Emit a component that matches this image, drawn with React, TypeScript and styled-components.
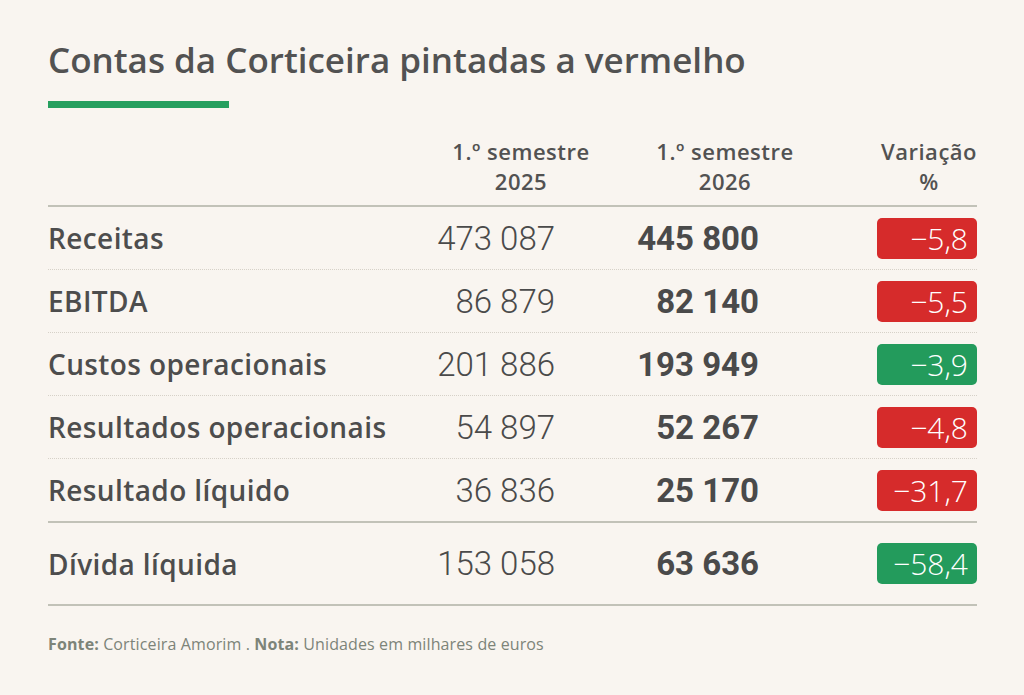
import React from "react";
import styled, { createGlobalStyle } from "styled-components";

const GlobalStyle = createGlobalStyle`
  html, body {
    margin: 0;
    padding: 0;
    background: #f9f5f0;
  }
  body {
    font-family: "Open Sans", "Liberation Sans", sans-serif;
    color: #4d4d4d;
  }
`;

const Page = styled.div`
  width: 1024px;
  height: 695px;
  box-sizing: border-box;
  padding: 38px 47px 0 48px;
  background: #f9f5f0;
`;

const Title = styled.h1`
  margin: 0;
  font-size: 35px;
  line-height: 44px;
  font-weight: 600;
  color: #525252;
`;

const Accent = styled.div`
  width: 181px;
  height: 7px;
  margin-top: 19px;
  background: #27a05f;
`;

const Row = styled.div<{ $last?: boolean; $tall?: boolean }>`
  display: grid;
  grid-template-columns: 1fr 204px 204px 150px;
  align-items: center;
  height: ${(p) => (p.$tall ? "81px" : "62px")};
  border-bottom: ${(p) => (p.$last ? "2px solid #c2c2b8" : "1px dotted #d6d1c8")};
`;

const HeadRow = styled(Row)`
  height: auto;
  margin-top: 28px;
  padding-bottom: 9px;
  border-bottom: 2px solid #c2c2b8;
`;

const HeadCell = styled.div<{ $end?: boolean }>`
  font-size: 22px;
  line-height: 30px;
  letter-spacing: 0.5px;
  font-weight: 600;
  color: #525252;
  text-align: center;
  justify-self: ${(p) => (p.$end ? "end" : "center")};
  white-space: nowrap;
`;

const Label = styled.div`
  font-size: 28px;
  letter-spacing: 0.4px;
  font-weight: 600;
  color: #4d4d4d;
  white-space: nowrap;
`;

const Value = styled.div<{ $bold?: boolean }>`
  font-family: "Roboto", "Liberation Sans", sans-serif;
  font-size: 33px;
  font-weight: ${(p) => (p.$bold ? 700 : 300)};
  color: #4a4a4a;
  text-align: right;
  padding-right: 68px;
`;

const Badge = styled.div<{ $good?: boolean }>`
  justify-self: end;
  width: 100px;
  height: 41px;
  box-sizing: border-box;
  border-radius: 5px;
  background: ${(p) => (p.$good ? "#239b5c" : "#d62b2b")};
  color: #fff;
  font-size: 30px;
  font-weight: 300;
  line-height: 41px;
  text-align: right;
  padding-right: 9px;
`;

const Footer = styled.p`
  margin: 27px 0 0;
  font-size: 16px;
  letter-spacing: 0.12px;
  color: #7d8479;
  & b {
    font-weight: 700;
  }
`;

type Line = { label: string; a: string; b: string; v: string; good?: boolean };

const lines: Line[] = [
  { label: "Receitas", a: "473 087", b: "445 800", v: "−5,8" },
  { label: "EBITDA", a: "86 879", b: "82 140", v: "−5,5" },
  { label: "Custos operacionais", a: "201 886", b: "193 949", v: "−3,9", good: true },
  { label: "Resultados operacionais", a: "54 897", b: "52 267", v: "−4,8" },
  { label: "Resultado líquido", a: "36 836", b: "25 170", v: "−31,7" },
];

export default function App() {
  return (
    <>
      <GlobalStyle />
      <Page>
        <Title>Contas da Corticeira pintadas a vermelho</Title>
        <Accent />
        <HeadRow>
          <div />
          <HeadCell>
            1.º semestre
            <br />
            2025
          </HeadCell>
          <HeadCell>
            1.º semestre
            <br />
            2026
          </HeadCell>
          <HeadCell $end>
            Variação
            <br />%
          </HeadCell>
        </HeadRow>
        {lines.map((l, i) => (
          <Row key={l.label} $last={i === lines.length - 1}>
            <Label>{l.label}</Label>
            <Value>{l.a}</Value>
            <Value $bold>{l.b}</Value>
            <Badge $good={l.good}>{l.v}</Badge>
          </Row>
        ))}
        <Row $last $tall>
          <Label>Dívida líquida</Label>
          <Value>153 058</Value>
          <Value $bold>63 636</Value>
          <Badge $good>−58,4</Badge>
        </Row>
        <Footer>
          <b>Fonte:</b> Corticeira Amorim . <b>Nota:</b> Unidades em milhares de euros
        </Footer>
      </Page>
    </>
  );
}
